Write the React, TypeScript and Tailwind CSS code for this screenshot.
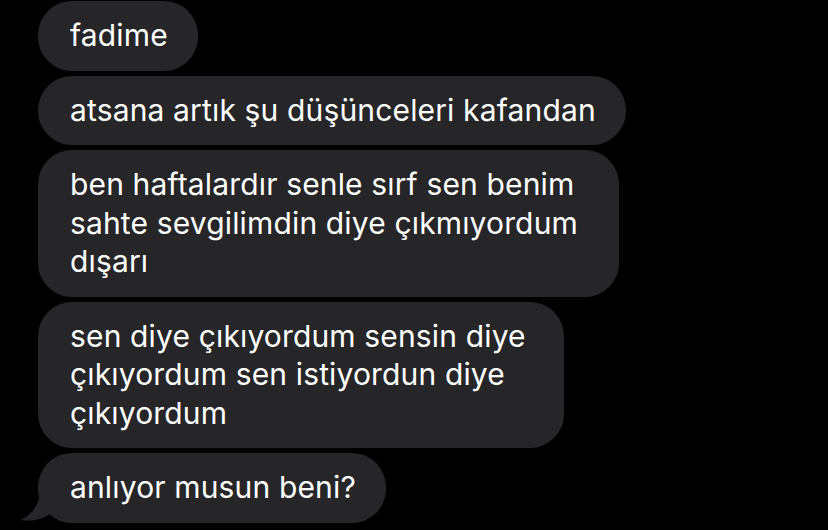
import React from 'react';

type Msg = { text: string[]; pr: string };

const messages: Msg[] = [
  { text: ['fadime'], pr: 'pr-[30px]' },
  { text: ['atsana artık şu düşünceleri kafandan'], pr: 'pr-[30px]' },
  { text: ['ben haftalardır senle sırf sen benim', 'sahte sevgilimdin diye çıkmıyordum', 'dışarı'], pr: 'pr-[41px]' },
  { text: ['sen diye çıkıyordum sensin diye', 'çıkıyordum sen istiyordun diye', 'çıkıyordum'], pr: 'pr-[38px]' },
];

const Bubble: React.FC<{ text: string[]; pr: string; tail?: boolean }> = ({ text, pr, tail }) => (
  <div className="relative self-start">
    {tail && (
      <svg className="absolute left-[-18px] bottom-0" width="40" height="34" viewBox="0 0 40 34">
        <path d="M20 0 C20 14 14 24 1 31 C14 33 24 30 34 22 L40 0 Z" fill="#262628" />
      </svg>
    )}
    <div className={`relative rounded-[34px] bg-[#262628] pl-8 ${pr} pt-[15px] pb-4 text-[30px] leading-[38.5px] tracking-[0.15px] text-white`}>
      {text.map((t, i) => (
        <div key={i}>{t}</div>
      ))}
    </div>
  </div>
);

export default function App() {
  return (
    <div
      className="h-[530px] w-[828px] overflow-hidden bg-black pl-[38px] pt-[1px]"
      style={{ fontFamily: 'Inter, "Noto Sans", sans-serif' }}
    >
      <div className="flex flex-col gap-[5px]">
        {messages.map((m, i) => (
          <Bubble key={i} text={m.text} pr={m.pr} />
        ))}
        <Bubble text={['anlıyor musun beni?']} pr="pr-[30px]" tail />
      </div>
    </div>
  );
}
